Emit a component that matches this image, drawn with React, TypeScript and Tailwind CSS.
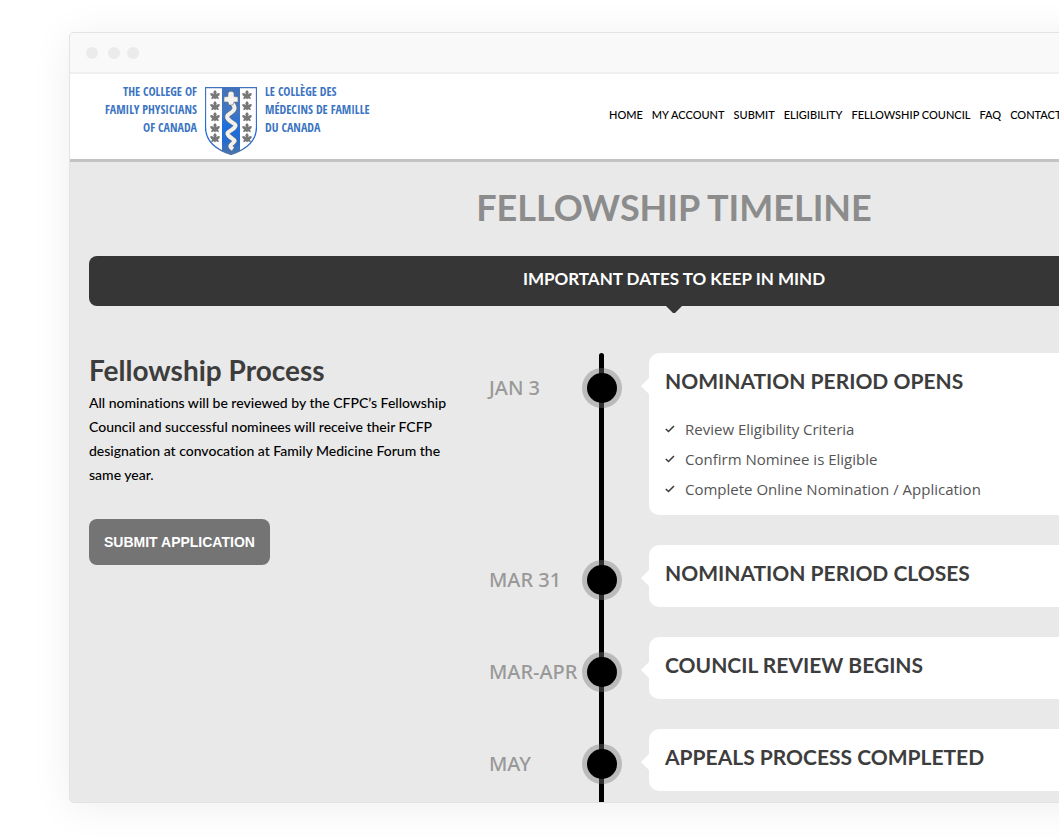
import type { ReactNode } from "react";

const humanist = "font-['Lato','Open_Sans',sans-serif]";

const navItems = ["HOME", "MY ACCOUNT", "SUBMIT", "ELIGIBILITY", "FELLOWSHIP COUNCIL", "FAQ", "CONTACT"];

type Milestone = { date: string; title: string; steps?: string[] };

const milestones: Milestone[] = [
  {
    date: "JAN 3",
    title: "NOMINATION PERIOD OPENS",
    steps: ["Review Eligibility Criteria", "Confirm Nominee is Eligible", "Complete Online Nomination / Application"],
  },
  { date: "MAR 31", title: "NOMINATION PERIOD CLOSES" },
  { date: "MAR-APR", title: "COUNCIL REVIEW BEGINS" },
  { date: "MAY", title: "APPEALS PROCESS COMPLETED" },
];

const leafRows = [8, 19, 30, 41, 51];

function Leaf({ x, y }: { x: number; y: number }) {
  return (
    <path
      transform={`translate(${x} ${y})`}
      fill="#777"
      d="M0-5 1.700-3 1.200-.8 3-2 5-1.400 4.200.4 2.800 1.600 3.800 3 3.400 4.200 1 3.200 0 4.600-1 3.200-3.400 4.200-3.800 3-2.800 1.600-4.200.4-5-1.400-3-2-1.200-.8-1.700-3Z"
    />
  );
}

function Crest() {
  return (
    <svg width="52" height="68" viewBox="0 0 52 68" aria-hidden="true">
      <defs>
        <linearGradient id="crest" x1="0" y1="0" x2="0" y2="1">
          <stop offset="0" stopColor="#4373b8" />
          <stop offset=".38" stopColor="#4076c4" />
          <stop offset=".6" stopColor="#1c6ee0" />
          <stop offset=".8" stopColor="#246bd0" />
          <stop offset="1" stopColor="#5275a5" />
        </linearGradient>
        <clipPath id="shield">
          <path d="M.5.5H51.5V40C51.5 55 40 63 26 67.5 12 63 .5 55 .5 40Z" />
        </clipPath>
      </defs>
      <g clipPath="url(#shield)">
        <rect width="52" height="68" fill="#fff" />
        <rect x="17" width="18" height="68" fill="url(#crest)" />
      </g>
      {leafRows.map((y) => (
        <g key={y}>
          <Leaf x={10} y={y} />
          <Leaf x={42} y={y} />
        </g>
      ))}
      <path
        d="M26 15C30 19 31 22 27 25S20 29 24 33 33 37 29 41 20 45 24 49 32 53 28 56 25 60 28 62"
        fill="none"
        stroke="#6c6e72"
        strokeWidth="5.200"
      />
      <path
        d="M26 15C30 19 31 22 27 25S20 29 24 33 33 37 29 41 20 45 24 49 32 53 28 56 25 60 28 62"
        fill="none"
        stroke="#f1f1ef"
        strokeWidth="4"
      />
      <path
        d="M23 6Q26 2.500 29 6V9.500L33 10V15H29L28 18H24L23 15H19V10L23 9.500Z"
        fill="#f4f4f2"
        stroke="#777"
        strokeWidth=".6"
      />
      <path
        d="M.5.5H51.5V40C51.5 55 40 63 26 67.5 12 63 .5 55 .5 40Z"
        fill="none"
        stroke="url(#crest)"
        strokeWidth="1.3"
      />
    </svg>
  );
}

function Logo() {
  return (
    <a
      href="#home"
      className="flex gap-2 font-['Open_Sans_Condensed','Roboto_Condensed','Liberation_Sans_Narrow',sans-serif] text-[12px] leading-[18px] font-bold whitespace-nowrap text-[#3b74c2]"
    >
      <span className="flex w-[95px] flex-none flex-col items-end">
        <span>THE COLLEGE OF</span>
        <span>FAMILY PHYSICIANS</span>
        <span>OF CANADA</span>
      </span>
      <span className="pt-1">
        <Crest />
      </span>
      <span className="flex w-[108px] flex-none flex-col">
        <span>LE COLLÈGE DES</span>
        <span>MÉDECINS DE FAMILLE</span>
        <span>DU CANADA</span>
      </span>
    </a>
  );
}

function Check() {
  return (
    <svg width="10" height="10" viewBox="0 0 10 10" fill="none" stroke="#3d3d3d" strokeWidth="1.6" aria-hidden="true">
      <path d="M.8 5 3.500 7.500 9 2" />
    </svg>
  );
}

function Card({ title, children }: { title: string; children?: ReactNode }) {
  return (
    <div className="relative ml-[27px] flex-1 rounded-[10px] bg-white px-4 pt-3 pb-[18px]">
      <svg className="absolute top-[25px] -left-2" width="8" height="16" viewBox="0 0 8 16" aria-hidden="true">
        <path d="M8 0V16L0 8Z" fill="#fff" />
      </svg>
      <h3 className={`${humanist} text-[21px] leading-8 font-bold text-[#3d3d3d]`}>{title}</h3>
      {children}
    </div>
  );
}

export default function App() {
  return (
    <div className="overflow-hidden bg-white pt-8 pb-9 pl-[69px]">
      <div className="-mr-[220px] overflow-hidden rounded-[5px] border border-[#e3e3e3] bg-[#e9e9e9] shadow-[0_4px_40px_rgba(0,0,0,0.07)]">
        <div className="flex h-[41px] items-center border-b-2 border-[#efefef] bg-[#f9f9f9] pl-4">
          <span className="size-3 rounded-full bg-[#ebebeb]" />
          <span className="ml-[10px] size-3 rounded-full bg-[#ebebeb]" />
          <span className="ml-[7px] size-3 rounded-full bg-[#ebebeb]" />
        </div>

        <header className="flex items-start border-b-3 border-[#c3c3c3] bg-white pt-[9px] pb-1 pl-8">
          <Logo />
          <nav
            className={`${humanist} ml-[236px] flex gap-[9px] pt-[22px] text-[11px] leading-5 font-medium whitespace-nowrap text-black`}
          >
            {navItems.map((item) => (
              <a key={item} href="#nav">
                {item}
              </a>
            ))}
          </nav>
        </header>

        <main className="px-[19px] pt-5 pb-[11px]">
          <h1 className={`${humanist} text-center text-[36px] leading-[50px] font-bold text-[#8c8c8c]`}>
            FELLOWSHIP TIMELINE
          </h1>
          <div className="relative mt-6 rounded-lg bg-[#363636] pt-[7px] pb-[11px] text-center">
            <h2 className={`${humanist} text-[17px] leading-8 font-bold text-white`}>IMPORTANT DATES TO KEEP IN MIND</h2>
            <svg className="absolute top-full left-1/2 -ml-2" width="16" height="7" viewBox="0 0 16 7" aria-hidden="true">
              <path d="M0 0H16L9 7H7Z" fill="#363636" />
            </svg>
          </div>

          <div className="mt-[47px] flex gap-[30px]">
            <section className="w-[370px] flex-none">
              <h2 className={`${humanist} pb-1 text-[28px] leading-[34px] font-bold text-[#3d3d3d]`}>
                Fellowship Process
              </h2>
              <p className={`${humanist} text-[14px] leading-6 font-medium text-black [font-variant-ligatures:none]`}>
                All nominations will be reviewed by the CFPC’s Fellowship Council and successful nominees will receive
                their FCFP designation at convocation at Family Medicine Forum the same year.
              </p>
              <button
                type="button"
                className="mt-8 h-[46px] rounded-lg bg-[#747474] px-[15px] font-['Liberation_Sans',Arial,sans-serif] text-[14px] font-bold whitespace-nowrap text-white"
              >
                SUBMIT APPLICATION
              </button>
            </section>

            <div className="relative flex-1">
              <span className="absolute top-0 -bottom-[11px] left-[110px] w-[5px] rounded-t-sm bg-black" />
              <ol className="relative flex flex-col gap-[30px]">
                {milestones.map((m) => (
                  <li key={m.title} className="flex items-start">
                    <span className="w-[93px] flex-none pt-[15px] font-['Noto_Sans','Open_Sans',sans-serif] text-[20px] leading-10 font-medium whitespace-nowrap text-[#999]">
                      {m.date}
                    </span>
                    <span className="mt-[15px] flex size-10 flex-none items-center justify-center rounded-full bg-[#757575]/40">
                      <span className="size-[30px] rounded-full bg-black" />
                    </span>
                    <Card title={m.title}>
                      {m.steps && (
                        <ul className="-mb-[7px] pt-[17px] font-['Open_Sans',sans-serif] text-[15px] leading-[30px] text-[#555]">
                          {m.steps.map((step) => (
                            <li key={step} className="flex items-center gap-[10px]">
                              <Check />
                              {step}
                            </li>
                          ))}
                        </ul>
                      )}
                    </Card>
                  </li>
                ))}
              </ol>
            </div>
          </div>
        </main>
      </div>
    </div>
  );
}
